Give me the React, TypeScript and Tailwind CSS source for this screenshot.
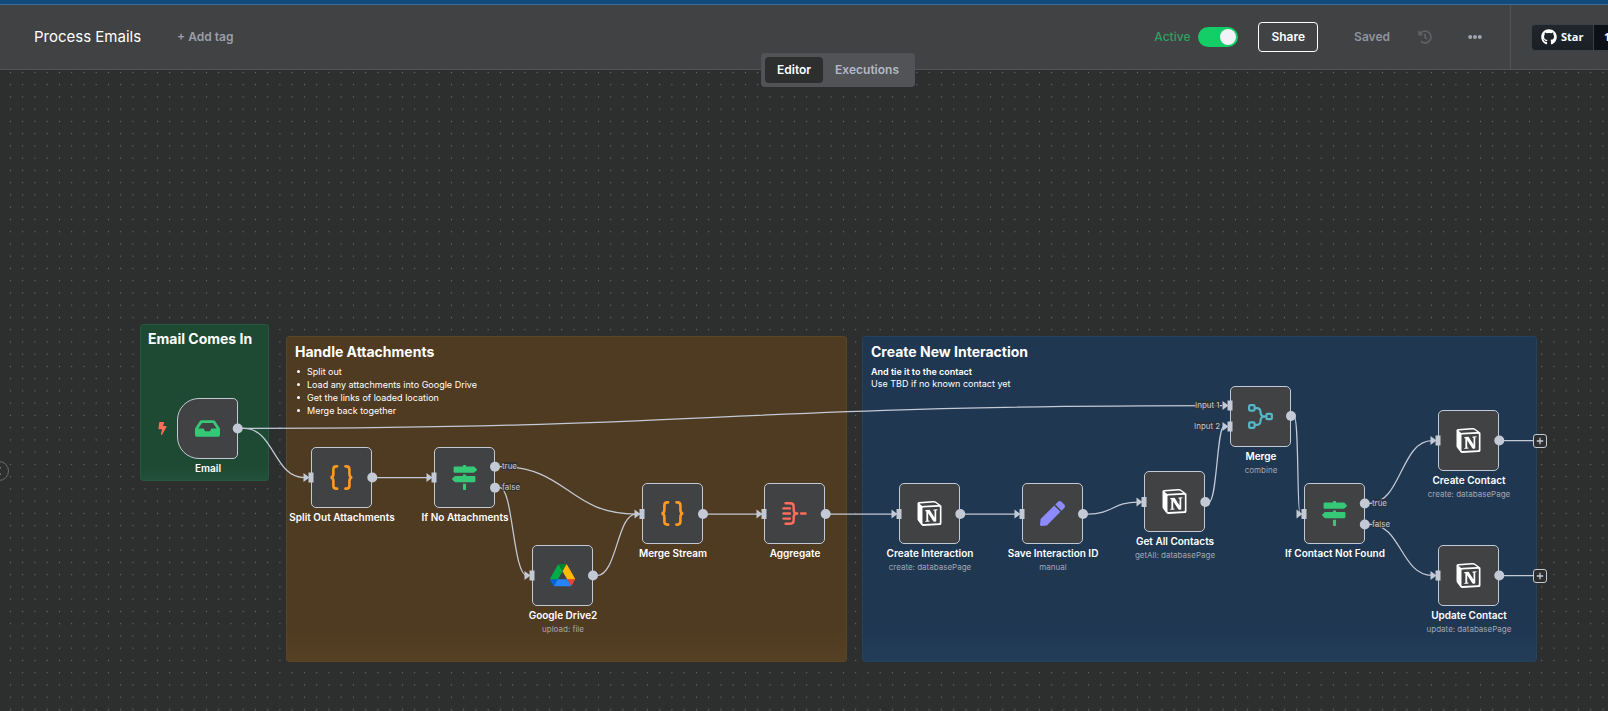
import React from "react";
import { FaBolt, FaEllipsisH, FaGithub, FaHistory, FaInbox, FaMapSigns, FaPen } from "react-icons/fa";
import { SiNotion } from "react-icons/si";

type IconName = "inbox" | "code" | "signs" | "drive" | "aggregate" | "notion" | "pen" | "merge";

interface FlowNode {
  id: string;
  name: string;
  detail?: string;
  icon: IconName;
  x: number;
  y: number;
  trigger?: boolean;
}

const NODES: FlowNode[] = [
  { id: "email", name: "Email", icon: "inbox", x: 177, y: 328, trigger: true },
  { id: "split", name: "Split Out Attachments", icon: "code", x: 311, y: 377 },
  { id: "if-att", name: "If No Attachments", icon: "signs", x: 434, y: 377 },
  { id: "drive", name: "Google Drive2", detail: "upload: file", icon: "drive", x: 532, y: 475 },
  { id: "stream", name: "Merge Stream", icon: "code", x: 642, y: 413 },
  { id: "aggregate", name: "Aggregate", icon: "aggregate", x: 764, y: 413 },
  { id: "create-int", name: "Create Interaction", detail: "create: databasePage", icon: "notion", x: 899, y: 413 },
  { id: "save-id", name: "Save Interaction ID", detail: "manual", icon: "pen", x: 1022, y: 413 },
  { id: "get-all", name: "Get All Contacts", detail: "getAll: databasePage", icon: "notion", x: 1144, y: 401 },
  { id: "merge", name: "Merge", detail: "combine", icon: "merge", x: 1230, y: 316 },
  { id: "if-contact", name: "If Contact Not Found", icon: "signs", x: 1304, y: 413 },
  { id: "create-con", name: "Create Contact", detail: "create: databasePage", icon: "notion", x: 1438, y: 340 },
  { id: "update-con", name: "Update Contact", detail: "update: databasePage", icon: "notion", x: 1438, y: 475 },
];

const EDGES: string[] = [
  "M238 358.3 H244 C274 358.3 274 407.5 304 407.5",
  "M238 358.3 H244 C716 358.3 716 335.7 1222 335.7",
  "M372 407.5 H427",
  "M495 396.7 H500 C568 396.7 568 444 636 444",
  "M495 417.7 H500 C513 417.7 513 505.5 527 505.5",
  "M593 505.5 H597 C617 505.5 617 444 636 444",
  "M703 444 H757",
  "M826 444 H892",
  "M960 444 H1016",
  "M1083 444 H1088 C1113 444 1113 432 1138 432",
  "M1205.5 432 H1209 C1217 432 1217 356.3 1224 356.3",
  "M1291 346 H1294 C1299 346 1297 444 1300 444",
  "M1365 433.3 H1370 C1401 433.3 1401 370.7 1432 370.7",
  "M1365 454.3 H1370 C1401 454.3 1401 505.3 1432 505.3",
  "M1499 370.7 H1533",
  "M1499 505.5 H1533",
];

const INPUTS: [number, number][] = [
  [311, 407.5], [434, 407.5], [532, 505.5], [642, 444], [764, 444], [899, 444], [1022, 444],
  [1144, 432], [1230, 335.5], [1230, 356.5], [1304, 444], [1438, 370.5], [1438, 505.5],
];

const OUTPUTS: [number, number][] = [
  [237.7, 358.5], [372.3, 407.5], [495, 396.7], [495, 417.7], [593, 505.5], [703, 444], [825.7, 444],
  [960.3, 444], [1083, 444], [1205.3, 432], [1291, 346], [1364.8, 433.5], [1364.8, 454.5],
  [1499.3, 370.5], [1499.3, 505.5],
];

const PORT_LABELS: { text: string; x: number; y: number }[] = [
  { text: "true", x: 502, y: 392 },
  { text: "false", x: 502, y: 413 },
  { text: "true", x: 1372, y: 429 },
  { text: "false", x: 1372, y: 450 },
  { text: "Input 1", x: 1195, y: 331 },
  { text: "Input 2", x: 1194, y: 352 },
];

function CodeIcon() {
  return (
    <svg viewBox="0 0 24 24" className="size-[25px]" fill="none" stroke="#ff9922" strokeWidth="2.5" strokeLinecap="round">
      <path d="M7.8 1.3H7C5 1.3 4.2 2.4 4.2 4.2V8.4C4.2 10.6 3.2 12 1.4 12C3.2 12 4.2 13.4 4.2 15.6V19.8C4.2 21.6 5 22.7 7 22.7H7.8" />
      <path d="M15.8 1.3H16.8C18.8 1.3 19.6 2.4 19.6 4.2V8.4C19.6 10.6 20.6 12 22.4 12C20.6 12 19.6 13.4 19.6 15.6V19.8C19.6 21.6 18.8 22.7 16.8 22.7H15.8" />
    </svg>
  );
}

function DriveIcon() {
  return (
    <svg viewBox="0 0 87.3 78" className="w-[25px]">
      <path d="m6.6 66.85 3.85 6.65c.8 1.4 1.95 2.5 3.3 3.3l13.75-23.8h-27.5c0 1.55.4 3.1 1.2 4.5z" fill="#0066da" />
      <path d="m43.65 25-13.75-23.8c-1.35.8-2.5 1.9-3.3 3.3l-25.4 44a9.06 9.06 0 0 0 -1.2 4.5h27.5z" fill="#00ac47" />
      <path d="m73.55 76.8c1.35-.8 2.5-1.9 3.3-3.3l1.6-2.75 7.65-13.25c.8-1.4 1.2-2.95 1.2-4.5h-27.502l5.852 11.5z" fill="#ea4335" />
      <path d="m43.65 25 13.75-23.8c-1.35-.8-2.9-1.2-4.5-1.2h-18.5c-1.6 0-3.15.45-4.5 1.2z" fill="#00832d" />
      <path d="m59.8 53h-32.3l-13.75 23.8c1.35.8 2.9 1.2 4.5 1.2h50.8c1.6 0 3.15-.45 4.5-1.2z" fill="#2684fc" />
      <path d="m73.4 26.5-12.7-22c-.8-1.4-1.95-2.5-3.3-3.3l-13.75 23.8 16.15 28h27.45c0-1.55-.4-3.1-1.2-4.5z" fill="#ffba00" />
    </svg>
  );
}

function AggregateIcon() {
  return (
    <svg viewBox="0 0 24 24" className="size-[25px]" fill="none" stroke="#ff6d5a" strokeWidth="2.3" strokeLinecap="round">
      <path d="M3.4 2.2H8C10.4 2.2 11.2 3.2 11.2 5.2V8.2C11.2 10.6 12 12 14 12H14.6" />
      <path d="M3.4 21.8H8C10.4 21.8 11.2 20.8 11.2 18.8V15.8C11.2 13.4 12 12 14 12" />
      <path d="M1.4 7.1H7.6M1.4 12H7.6M1.4 16.9H7.6M18.4 12H22.6" />
    </svg>
  );
}

function MergeIcon() {
  return (
    <svg viewBox="0 0 24 24" className="size-[25px]" fill="none" stroke="#54b8c9" strokeWidth="2.1">
      <rect x="1.1" y="1.1" width="5.2" height="5.2" rx="1" />
      <rect x="1.1" y="17.7" width="5.2" height="5.2" rx="1" />
      <rect x="17.7" y="9.4" width="5.2" height="5.2" rx="1" />
      <path d="M6.6 4H8.6C11 4 12 5.4 12 7.6C12 10.6 13.4 12 16 12H17.6" />
      <path d="M6.6 20H8.6C11 20 12 18.6 12 16.4C12 13.4 13.4 12 16 12" />
    </svg>
  );
}

function NodeIcon({ name }: { name: IconName }) {
  switch (name) {
    case "inbox":
      return <FaInbox className="size-[25px] text-[#35c877]" />;
    case "code":
      return <CodeIcon />;
    case "signs":
      return <FaMapSigns className="size-[25px] text-[#35c877]" />;
    case "drive":
      return <DriveIcon />;
    case "aggregate":
      return <AggregateIcon />;
    case "notion":
      return <SiNotion className="size-[25px] text-white" />;
    case "pen":
      return <FaPen className="size-[25px] text-[#8b8bff]" />;
    case "merge":
      return <MergeIcon />;
  }
}

function NodeCard({ node }: { node: FlowNode }) {
  return (
    <div className="absolute w-[61px]" style={{ left: node.x, top: node.y }}>
      <div
        className={
          node.trigger
            ? "flex size-[61px] items-center justify-center rounded-l-[22px] rounded-r-[5px] border border-[#c3c9d5] bg-[#414244]"
            : "flex size-[61px] items-center justify-center rounded-[5px] border border-[#c3c9d5] bg-[#414244]"
        }
      >
        <NodeIcon name={node.icon} />
      </div>
      {node.trigger && <FaBolt className="absolute top-6 -left-[21px] size-[13px] text-[#ff6d5a]" />}
      <div className="mt-[3px] -ml-10 w-[142px] text-center">
        <div className="text-[10px] leading-[13px] font-semibold text-white">{node.name}</div>
        {node.detail && <div className="text-[8px] leading-[14px] text-[#a3a7b0]">{node.detail}</div>}
      </div>
    </div>
  );
}

function Header() {
  return (
    <header className="relative flex h-[65px] w-[calc(100%+68px)] items-stretch border-b border-[#525356] bg-[#414244]">
      <div className="flex flex-1 items-center gap-9 pl-[34px]">
        <h1 className="text-[15px] font-normal text-white">Process Emails</h1>
        <button type="button" className="text-xs font-semibold text-[#9a9fa8]">+ Add tag</button>
      </div>
      <div className="flex items-center pr-7">
        <label htmlFor="active" className="mr-2 text-xs font-medium text-[#2fa163]">Active</label>
        <input
          id="active"
          type="checkbox"
          role="switch"
          defaultChecked
          className="mr-5 flex h-5 w-10 appearance-none items-center justify-end rounded-full bg-[#13ce66] px-0.5 before:block before:size-4 before:rounded-full before:bg-[#f2f2f8]"
        />
        <button type="button" className="h-[30px] rounded border border-white px-3 text-xs font-semibold text-white">
          Share
        </button>
        <span className="ml-9 text-xs font-semibold text-[#8f949e]">Saved</span>
        <button type="button" aria-label="Workflow history" className="ml-7 text-[#5f6063]">
          <FaHistory className="size-[14px]" />
        </button>
        <button type="button" aria-label="More actions" className="ml-9 text-[#a0a5b0]">
          <FaEllipsisH className="size-[14px]" />
        </button>
      </div>
      <div className="flex w-[166px] items-center border-l border-[#525356] pl-5">
        <a
          href="#star"
          className="flex h-[27px] w-[63px] items-center gap-1 rounded-l-sm border border-[#3a4047] bg-linear-to-b from-[#21262d] to-[#1a1f25] pl-[9px] font-['Open_Sans',sans-serif] text-[11px] font-bold text-white"
        >
          <FaGithub className="size-4" />
          Star
        </a>
        <a
          href="#stargazers"
          className="flex h-[27px] w-16 items-center rounded-r-sm border border-l-0 border-[#3a4047] bg-[#0d1117] pl-[10px] font-['Open_Sans',sans-serif] text-[11px] font-bold text-white"
        >
          1
        </a>
      </div>
      <nav className="absolute top-12 left-1/2 z-10 flex -translate-x-1/2 rounded bg-[#525356] p-1">
        <a href="#editor" className="rounded bg-[#2d2e2e] px-3 text-xs leading-[26px] font-semibold text-white">Editor</a>
        <a href="#executions" className="px-3 text-xs leading-[26px] font-semibold text-[#b4b9c5]">Executions</a>
      </nav>
    </header>
  );
}

const BULLET = "flex items-center before:mr-[7px] before:ml-0.5 before:size-[3px] before:rounded-full before:bg-white";

export default function App() {
  return (
    <div className="flex min-h-screen flex-col overflow-hidden bg-[#2d2e2e] font-['Inter',sans-serif]">
      <div className="h-[5px] border-b border-[#3b6c9c] bg-[#114a7b]" />
      <Header />
      <main className="relative flex-1 overflow-hidden">
        <svg className="absolute inset-0 size-full" aria-hidden="true">
          <defs>
            <pattern id="grid" x="4.3" y="-3.7" width="12.25" height="12.25" patternUnits="userSpaceOnUse">
              <circle cx="6.125" cy="6.125" r="0.6" fill="#707174" />
            </pattern>
          </defs>
          <rect width="100%" height="100%" fill="url(#grid)" />
        </svg>

        <button
          type="button"
          aria-label="Expand menu"
          className="absolute top-[391px] -left-[11px] flex size-5 items-center justify-center rounded-full border border-[#6a6b6e] bg-[#2d2e2e] text-[#b4b9c5]"
        >
          <svg viewBox="0 0 10 10" className="size-2.5" fill="none" stroke="currentColor" strokeWidth="1.2">
            <path d="M6.5 1.5L3 5L6.5 8.5" />
          </svg>
        </button>

        <section className="absolute top-[254px] left-[140px] h-[157px] w-[129px] rounded-[3px] border border-[#24583f] bg-linear-to-b from-[#1e4933] from-90% to-[#225039] px-[7px] py-[5px] text-white">
          <h2 className="text-[14px] leading-[18px] font-bold">Email Comes In</h2>
        </section>
        <section className="absolute top-[266px] left-[286px] h-[326px] w-[561px] rounded-[3px] border border-[#5b4524] bg-linear-to-b from-[#4f3b21] from-90% to-[#554023] px-2 py-[6px] text-white">
          <h2 className="text-[14px] leading-[18px] font-bold">Handle Attachments</h2>
          <ul className="mt-1 text-[9px] leading-[13px]">
            <li className={BULLET}>Split out</li>
            <li className={BULLET}>Load any attachments into Google Drive</li>
            <li className={BULLET}>Get the links of loaded location</li>
            <li className={BULLET}>Merge back together</li>
          </ul>
        </section>
        <section className="absolute top-[266px] left-[862px] h-[326px] w-[675px] rounded-[3px] border border-[#23425f] bg-linear-to-b from-[#1f3751] from-90% to-[#233d59] px-2 py-[6px] text-white">
          <h2 className="text-[14px] leading-[18px] font-bold">Create New Interaction</h2>
          <p className="mt-[5px] text-[9px] leading-[12px] font-semibold">And tie it to the contact</p>
          <p className="text-[9px] leading-[12px]">Use TBD if no known contact yet</p>
        </section>

        <svg className="absolute inset-0 size-full" fill="none" stroke="#c3c9d5" strokeWidth="1.25" aria-hidden="true">
          {EDGES.map((d) => (
            <path key={d} d={d} />
          ))}
        </svg>

        {NODES.map((node) => (
          <NodeCard key={node.id} node={node} />
        ))}

        <svg className="absolute inset-0 size-full" fill="#c3c9d5" aria-hidden="true">
          {INPUTS.map(([x, y]) => (
            <g key={`${x}-${y}`}>
              <path d={`M${x - 7.5} ${y - 4.5}L${x - 1.5} ${y}L${x - 7.5} ${y + 4.5}Z`} />
              <rect x={x - 2.5} y={y - 5} width="5" height="10" />
            </g>
          ))}
          {OUTPUTS.map(([x, y]) => (
            <circle key={`${x}-${y}`} cx={x} cy={y} r="5" />
          ))}
        </svg>

        {PORT_LABELS.map((label) => (
          <span
            key={`${label.x}-${label.y}`}
            className="absolute bg-[#2d2e2e]/80 text-[8px] leading-[8px] text-[#c3c9d5]"
            style={{ left: label.x, top: label.y }}
          >
            {label.text}
          </span>
        ))}

        {[364, 499].map((top) => (
          <button
            key={top}
            type="button"
            aria-label="Add node"
            className="absolute left-[1533px] flex size-[14px] items-center justify-center rounded-[3px] border border-[#c3c9d5] bg-[#2d2e2e] text-[#c3c9d5]"
            style={{ top }}
          >
            <svg viewBox="0 0 8 8" className="size-2" stroke="currentColor" strokeWidth="1.3">
              <path d="M4 0.8V7.2M0.8 4H7.2" />
            </svg>
          </button>
        ))}
      </main>
    </div>
  );
}
